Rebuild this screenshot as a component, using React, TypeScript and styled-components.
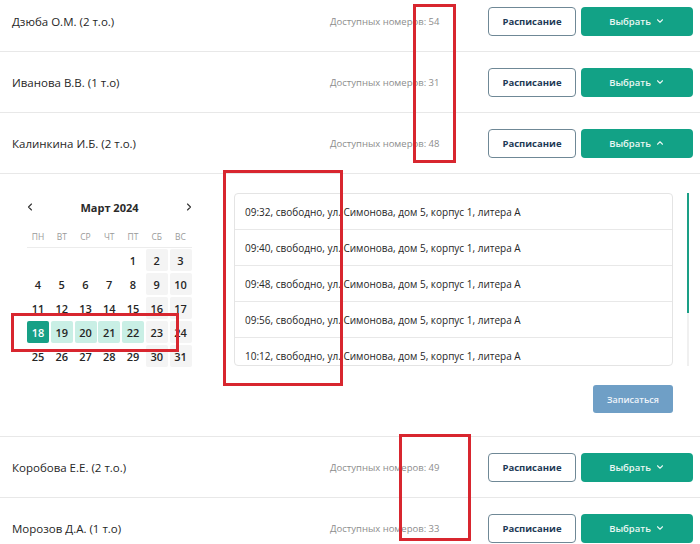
import React from "react";
import styled, { createGlobalStyle } from "styled-components";
import { ChevronDown, ChevronUp, ChevronLeft, ChevronRight } from "lucide-react";

const Global = createGlobalStyle`
  html, body { margin: 0; padding: 0; background: #fff; }
  body { font-family: "Open Sans", "Noto Sans", sans-serif; color: #222; }
  * { box-sizing: border-box; }
`;

const Page = styled.div`
  position: relative;
  width: 700px;
  height: 544px;
  overflow: hidden;
  background: #fff;
`;

const List = styled.div`
  display: flex;
  flex-direction: column;
  margin-top: -9px;
`;

const Row = styled.div`
  display: flex;
  align-items: center;
  height: 61px;
  padding: 0 7px 0 12px;
  border-bottom: 1px solid #e8e8e8;
`;

const Name = styled.div`
  flex: 1;
  font-size: 11.5px;
  color: #262626;
`;

const Stats = styled.div`
  width: 158px;
  font-size: 9.5px;
  color: #8d8d8d;
`;

const Buttons = styled.div`
  display: flex;
  gap: 5px;
`;

const OutlineButton = styled.button`
  width: 88px;
  height: 29px;
  border: 1px solid #6f8896;
  border-radius: 4px;
  background: #fff;
  color: #1e3a56;
  font-family: inherit;
  font-weight: 700;
  font-size: 9.5px;
  padding: 0;
`;

const PrimaryButton = styled.button`
  width: 112px;
  height: 29px;
  border: none;
  border-radius: 4px;
  background: #12a286;
  color: #e9f7f3;
  font-family: inherit;
  font-size: 9.5px;
  font-weight: 600;
  display: flex;
  align-items: center;
  justify-content: center;
  gap: 4px;
  padding: 0;
`;

const Panel = styled.div`
  display: flex;
  align-items: flex-start;
  gap: 42px;
  padding: 19px 11px 23px 27px;
  border-bottom: 1px solid #e8e8e8;
`;

const Calendar = styled.div`
  width: 165px;
  margin-top: 2px;
`;

const CalHeader = styled.div`
  height: 24px;
  display: flex;
  align-items: center;
  justify-content: space-between;
  margin: 0 -3px;
  color: #333;
`;

const MonthTitle = styled.div`
  font-size: 11px;
  font-weight: 700;
  color: #2a2a2a;
`;

const NavIcon = styled.span`
  display: flex;
  width: 12px;
  flex-shrink: 0;
  justify-content: center;
  svg { flex-shrink: 0; }
`;

const Weekdays = styled.div`
  display: grid;
  grid-template-columns: repeat(7, 22px);
  column-gap: 1.75px;
  height: 22px;
  margin-top: 6px;
  border-bottom: 1px solid #ececec;
  box-sizing: content-box;
  align-items: center;
`;

const Weekday = styled.div`
  text-align: center;
  font-size: 8.5px;
  color: #9a9a9a;
`;

const Days = styled.div`
  display: grid;
  grid-template-columns: repeat(7, 22px);
  grid-auto-rows: 22px;
  column-gap: 1.75px;
  row-gap: 2px;
  margin-top: 1px;
`;

const Day = styled.div<{ $kind: "empty" | "normal" | "weekend" | "range" | "selected" }>`
  display: flex;
  align-items: center;
  justify-content: center;
  border-radius: 2px;
  font-size: 11px;
  font-weight: 600;
  color: ${(p) => (p.$kind === "selected" ? "#ffffff" : "#262626")};
  background: ${(p) =>
    p.$kind === "selected"
      ? "#17a086"
      : p.$kind === "range"
      ? "#c9efe5"
      : p.$kind === "weekend"
      ? "#f4f4f4"
      : "transparent"};
`;

const Slots = styled.div`
  flex: 1;
  display: flex;
  flex-direction: column;
`;

const ScrollRow = styled.div`
  display: flex;
  gap: 14px;
`;

const SlotBox = styled.div`
  flex: 1;
  height: 173px;
  overflow: hidden;
  border: 1px solid #e4e4e4;
  border-radius: 4px;
`;

const Slot = styled.div`
  height: 36px;
  display: flex;
  align-items: center;
  padding-left: 10px;
  font-size: 10px;
  color: #262626;
  border-bottom: 1px solid #e8e8e8;
`;

const Track = styled.div`
  width: 2px;
  height: 173px;
  background: #f0f0f0;
  display: flex;
  flex-direction: column;
`;

const Thumb = styled.div`
  height: 120px;
  background: #1a9f86;
`;

const Footer = styled.div`
  display: flex;
  justify-content: flex-end;
  padding-right: 16px;
  margin-top: 19px;
`;

const SubmitButton = styled.button`
  width: 80px;
  height: 28px;
  border: none;
  border-radius: 3px;
  background: #6f9fc6;
  color: #eef4fa;
  font-family: inherit;
  font-size: 9px;
  font-weight: 600;
  padding: 0;
`;

const Mark = styled.div`
  position: absolute;
  border: 3px solid #d8262f;
  pointer-events: none;
`;

const doctors = [
  { name: "Дзюба О.М. (2 т.о.)", count: 54 },
  { name: "Иванова В.В. (1 т.о)", count: 31 },
  { name: "Калинкина И.Б. (2 т.о.)", count: 48, open: true },
  { name: "Коробова Е.Е. (2 т.о.)", count: 49 },
  { name: "Морозов Д.А. (1 т.о)", count: 33 },
];

const weekdays = ["ПН", "ВТ", "СР", "ЧТ", "ПТ", "СБ", "ВС"];

const slots = ["09:32", "09:40", "09:48", "09:56", "10:12"];

function dayKind(d: number | null, col: number): "empty" | "normal" | "weekend" | "range" | "selected" {
  if (d === null) return "empty";
  if (d === 18) return "selected";
  if (d >= 19 && d <= 22) return "range";
  if (col >= 5) return "weekend";
  return "normal";
}

function CalendarView() {
  const cells: (number | null)[] = [null, null, null, null];
  for (let i = 1; i <= 31; i++) cells.push(i);
  return (
    <Calendar>
      <CalHeader>
        <NavIcon>
          <ChevronLeft size={12} strokeWidth={2.2} color="#333" />
        </NavIcon>
        <MonthTitle>Март 2024</MonthTitle>
        <NavIcon>
          <ChevronRight size={12} strokeWidth={2.2} color="#333" />
        </NavIcon>
      </CalHeader>
      <Weekdays>
        {weekdays.map((w) => (
          <Weekday key={w}>{w}</Weekday>
        ))}
      </Weekdays>
      <Days>
        {cells.map((d, i) => (
          <Day key={i} $kind={dayKind(d, i % 7)}>
            {d ?? ""}
          </Day>
        ))}
      </Days>
    </Calendar>
  );
}

function DoctorRow({ name, count, open }: { name: string; count: number; open?: boolean }) {
  return (
    <Row>
      <Name>{name}</Name>
      <Stats>Доступных номеров: {count}</Stats>
      <Buttons>
        <OutlineButton>Расписание</OutlineButton>
        <PrimaryButton>
          Выбрать
          {open ? (
            <ChevronUp size={10} strokeWidth={2.6} />
          ) : (
            <ChevronDown size={10} strokeWidth={2.6} />
          )}
        </PrimaryButton>
      </Buttons>
    </Row>
  );
}

export default function App() {
  return (
    <Page>
      <Global />
      <List>
        {doctors.map((d) => (
          <React.Fragment key={d.name}>
            <DoctorRow name={d.name} count={d.count} open={d.open} />
            {d.open && (
              <Panel>
                <CalendarView />
                <Slots>
                  <ScrollRow>
                    <SlotBox>
                      {slots.map((t) => (
                        <Slot key={t}>
                          {t}, свободно, ул. Симонова, дом 5, корпус 1, литера А
                        </Slot>
                      ))}
                    </SlotBox>
                    <Track>
                      <Thumb />
                    </Track>
                  </ScrollRow>
                  <Footer>
                    <SubmitButton>Записаться</SubmitButton>
                  </Footer>
                </Slots>
              </Panel>
            )}
          </React.Fragment>
        ))}
      </List>
      <Mark style={{ left: 413, top: 4, width: 43, height: 159 }} />
      <Mark style={{ left: 11, top: 313, width: 168, height: 39 }} />
      <Mark style={{ left: 223, top: 170, width: 120, height: 216 }} />
      <Mark style={{ left: 399, top: 434, width: 72, height: 107 }} />
    </Page>
  );
}
